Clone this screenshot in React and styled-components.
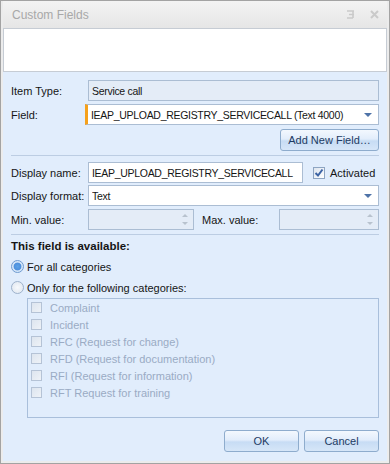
import React from 'react'
import styled, { createGlobalStyle } from 'styled-components'

const GlobalStyle = createGlobalStyle`
    body {
        margin: 0;
        font-family: Tahoma, "Liberation Sans", "DejaVu Sans", sans-serif;
        font-size: 11px;
    }
`

const Window = styled.div`
    width: 390px;
    height: 464px;
    box-sizing: border-box;
    border: 1px solid #a3a3a3;
    background: #ececec;
    padding: 0 2px 2px;
    display: flex;
    flex-direction: column;
`

const TitleBar = styled.div`
    height: 27px;
    flex: 0 0 27px;
    display: flex;
    align-items: center;
    padding: 0 8px 0 9px;
    background: linear-gradient(#f3f3f3, #e6e6e6);
    color: #a8a8a8;
    font-size: 12px;
`

const Title = styled.span`
    flex: 1;
`

const TitleIcons = styled.div`
    display: flex;
    gap: 15px;
    align-items: center;
`

const Notes = styled.div`
    height: 42px;
    flex: 0 0 42px;
    background: #fff;
    border: 1px solid #c6ccd4;
`

const Panel = styled.div`
    flex: 1;
    background: #e1edfc;
    padding: 8px 8px 0 8px;
    display: flex;
    flex-direction: column;
    color: #151515;
`

const Row = styled.div`
    display: flex;
    align-items: center;
    height: 21px;
    margin-bottom: ${p => p.mb || 0}px;
`

const Label = styled.span`
    box-sizing: border-box;
    flex: 0 0 ${p => p.w || 77}px;
    padding-left: ${p => p.pl || 0}px;
    white-space: nowrap;
`

const Box = styled.div`
    box-sizing: border-box;
    height: 21px;
    flex: ${p => (p.w ? `0 0 ${p.w}px` : 1)};
    min-width: 0;
    background: ${p => (p.disabled ? '#e4ecf7' : '#fff')};
    border: 1px solid #abbdd3;
    border-left: ${p => (p.marked ? '3px solid #f5a11c' : '1px solid #abbdd3')};
    margin-left: ${p => (p.marked ? -3 : 0)}px;
    display: flex;
    align-items: center;
    padding: 0 4px 0 3px;
    white-space: nowrap;
    font-size: 10.5px;
    letter-spacing: -0.3px;
`

const BoxText = styled.span`
    flex: 1;
    min-width: 0;
    overflow: hidden;
`

const Arrow = styled.span`
    width: 0;
    height: 0;
    border-left: 4px solid transparent;
    border-right: 4px solid transparent;
    border-top: 4px solid #4f73a8;
    margin: 0 2px 0 4px;
`

const Spin = styled.div`
    display: flex;
    flex-direction: column;
    gap: 5px;
    margin-right: 1px;
`

const SpinTri = styled.span`
    width: 0;
    height: 0;
    border-left: 3px solid transparent;
    border-right: 3px solid transparent;
    ${p => (p.up ? 'border-bottom: 3px solid #b8c2ce;' : 'border-top: 3px solid #b8c2ce;')}
`

const Button = styled.button`
    box-sizing: border-box;
    width: ${p => p.w}px;
    height: 22px;
    font-family: inherit;
    font-size: 11px;
    color: #1d3b63;
    border: 1px solid #8eaccd;
    border-radius: 3px;
    background: linear-gradient(#f3f8fe 0%, #e2edfb 45%, #c7dcf4 55%, #d6e6f8 100%);
    padding: 0;
    margin: 0;
`

const ButtonRow = styled.div`
    display: flex;
    justify-content: flex-end;
    gap: ${p => p.gap || 0}px;
    margin-top: ${p => p.mt || 0}px;
`

const Separator = styled.div`
    height: 1px;
    background: #bccde3;
    margin: ${p => p.m};
`

const CheckBox = styled.span`
    box-sizing: border-box;
    width: ${p => (p.disabled ? 11 : 12)}px;
    height: ${p => (p.disabled ? 11 : 12)}px;
    flex: 0 0 auto;
    border: 1px solid ${p => (p.disabled ? '#b5c3d6' : '#8ea5c2')};
    background: ${p => (p.disabled ? 'linear-gradient(135deg, #dde5ef, #eef2f7)' : 'linear-gradient(135deg, #dde5ef, #fff)')};
    display: inline-flex;
    align-items: center;
    justify-content: center;
`

const Activated = styled.label`
    display: flex;
    align-items: center;
    gap: 5px;
    margin-left: 10px;
`

const Heading = styled.div`
    font-weight: bold;
    font-size: 11.5px;
    height: 21px;
    display: flex;
    align-items: center;
`

const Radio = styled.label`
    display: flex;
    align-items: center;
    gap: 3px;
    height: 21px;
`

const RadioDot = styled.span`
    box-sizing: border-box;
    width: 13px;
    height: 13px;
    border-radius: 50%;
    border: 1px solid ${p => (p.on ? '#6f9bd0' : '#9eb2cb')};
    background: ${p =>
        p.on
            ? 'radial-gradient(circle, #5ba2e8 0%, #4d8fdc 45%, #cfe2f7 55%, #eef5fd 100%)'
            : 'radial-gradient(circle, #f7f9fc 0%, #dde5ef 100%)'};
`

const Group = styled.div`
    margin-left: 16px;
    height: 120px;
    box-sizing: border-box;
    border: 1px solid #a9bfdb;
    padding: 0 3px;
`

const CatItem = styled.div`
    display: flex;
    align-items: center;
    gap: 8px;
    height: 17px;
    color: #9aabc4;
`

const Check = () => (
    <svg width="10" height="10" viewBox="0 0 10 10">
        <path d="M1.5 5 L4 7.5 L8.5 1.5" fill="none" stroke="#3c63a4" strokeWidth="2" />
    </svg>
)

const categories = [
    'Complaint',
    'Incident',
    'RFC (Request for change)',
    'RFD (Request for documentation)',
    'RFI (Request for information)',
    'RFT Request for training',
]

function App() {
    return (
        <>
            <GlobalStyle />
            <Window>
                <TitleBar>
                    <Title>Custom Fields</Title>
                    <TitleIcons>
                        <svg width="8" height="9" viewBox="0 0 8 9">
                            <path d="M0 1 H7 M2 4.5 H7 M0 8 H6 M6 1 V8" stroke="#cacaca" strokeWidth="1.6" fill="none" />
                        </svg>
                        <svg width="9" height="9" viewBox="0 0 9 9">
                            <path d="M1 1 L8 8 M8 1 L1 8" stroke="#cacaca" strokeWidth="2" />
                        </svg>
                    </TitleIcons>
                </TitleBar>
                <Notes />
                <Panel>
                    <Row mb={3}>
                        <Label>Item Type:</Label>
                        <Box disabled>
                            <BoxText>Service call</BoxText>
                        </Box>
                    </Row>
                    <Row mb={4}>
                        <Label>Field:</Label>
                        <Box marked>
                            <BoxText>IEAP_UPLOAD_REGISTRY_SERVICECALL (Text 4000)</BoxText>
                            <Arrow />
                        </Box>
                    </Row>
                    <ButtonRow>
                        <Button w={99}>Add New Field…</Button>
                    </ButtonRow>
                    <Separator m="4px 0 6px 0" />
                    <Row mb={2}>
                        <Label>Display name:</Label>
                        <Box w={215}>
                            <BoxText>IEAP_UPLOAD_REGISTRY_SERVICECALL</BoxText>
                        </Box>
                        <Activated>
                            <CheckBox>
                                <Check />
                            </CheckBox>
                            Activated
                        </Activated>
                    </Row>
                    <Row mb={3}>
                        <Label>Display format:</Label>
                        <Box>
                            <BoxText>Text</BoxText>
                            <Arrow />
                        </Box>
                    </Row>
                    <Row>
                        <Label>Min. value:</Label>
                        <Box w={106} disabled>
                            <BoxText />
                            <Spin>
                                <SpinTri up />
                                <SpinTri />
                            </Spin>
                        </Box>
                        <Label w={85} pl={8}>Max. value:</Label>
                        <Box disabled>
                            <BoxText />
                            <Spin>
                                <SpinTri up />
                                <SpinTri />
                            </Spin>
                        </Box>
                    </Row>
                    <Separator m="4px 0 0 0" />
                    <Heading>This field is available:</Heading>
                    <Radio>
                        <RadioDot on />
                        For all categories
                    </Radio>
                    <Radio>
                        <RadioDot />
                        Only for the following categories:
                    </Radio>
                    <Group>
                        {categories.map(c => (
                            <CatItem key={c}>
                                <CheckBox disabled />
                                {c}
                            </CatItem>
                        ))}
                    </Group>
                    <ButtonRow gap={5} mt={12}>
                        <Button w={75}>OK</Button>
                        <Button w={75}>Cancel</Button>
                    </ButtonRow>
                </Panel>
            </Window>
        </>
    )
}

export default App
